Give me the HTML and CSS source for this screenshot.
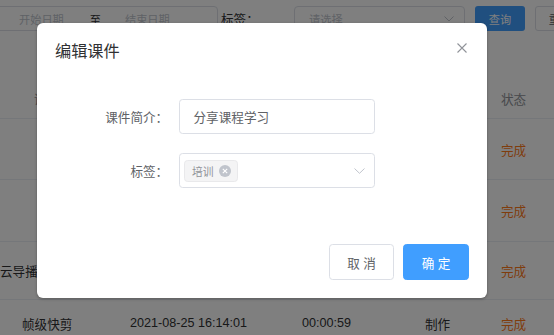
FILE: index.html
```html
<!DOCTYPE html>
<html lang="zh-CN">
<head>
<meta charset="utf-8">
<title>编辑课件</title>
<link rel="stylesheet" href="styles.css">
</head>
<body>
<div class="page">
  <div class="filter">
    <div class="date-range">
      <span class="dr-start">开始日期</span>
      <span class="dr-sep">至</span>
      <span class="dr-end">结束日期</span>
    </div>
    <span class="f-label">标签：</span>
    <div class="f-select">
      <span class="ph">请选择</span>
      <svg class="chev" width="10" height="6" viewBox="0 0 10 6"><path d="M0.5 0.5 L5 5 L9.5 0.5" fill="none" stroke="#c0c4cc" stroke-width="1"/></svg>
    </div>
    <button class="btn-query">查询</button>
    <button class="btn-reset">重置</button>
  </div>
  <div class="table">
    <div class="row head">
      <div class="cell c1h">课件名称</div><div class="cell">创建时间</div><div class="cell">时长</div><div class="cell">类型</div><div class="cell">状态</div>
    </div>
    <div class="row r1">
      <div class="cell c1in">课件一</div><div class="cell">2021-08-25 16:20:11</div><div class="cell">00:01:10</div><div class="cell">制作</div><div class="cell done">完成</div>
    </div>
    <div class="row r2">
      <div class="cell c1in">课件二</div><div class="cell">2021-08-25 16:18:32</div><div class="cell">00:02:05</div><div class="cell">制作</div><div class="cell done">完成</div>
    </div>
    <div class="row r3">
      <div class="cell c1edge">云导播台</div><div class="cell">2021-08-25 16:16:47</div><div class="cell">00:00:42</div><div class="cell">制作</div><div class="cell done">完成</div>
    </div>
    <div class="row r4">
      <div class="cell">帧级快剪</div><div class="cell">2021-08-25 16:14:01</div><div class="cell">00:00:59</div><div class="cell">制作</div><div class="cell done">完成</div>
    </div>
  </div>
</div>
<div class="mask"></div>
<div class="dialog">
  <div class="d-header">
    <span class="d-title">编辑课件</span>
    <svg class="d-close" width="10" height="10" viewBox="0 0 10 10"><path d="M0.5 0.5 L9.5 9.5 M9.5 0.5 L0.5 9.5" stroke="#909399" stroke-width="1.1" fill="none"/></svg>
  </div>
  <div class="d-body">
    <div class="form-item">
      <label class="form-label">课件简介：</label>
      <div class="input">分享课程学习</div>
    </div>
    <div class="form-item">
      <label class="form-label">标签：</label>
      <div class="input select">
        <span class="tag">培训<span class="tag-x"><svg width="6" height="6" viewBox="0 0 6 6"><path d="M0.8 0.8 L5.2 5.2 M5.2 0.8 L0.8 5.2" stroke="#fff" stroke-width="1.1"/></svg></span></span>
        <svg class="sel-chev" width="11" height="6" viewBox="0 0 11 6"><path d="M0.5 0.5 L5.5 5.3 L10.5 0.5" fill="none" stroke="#c0c4cc" stroke-width="1"/></svg>
      </div>
    </div>
  </div>
  <div class="d-footer">
    <button class="btn btn-cancel">取 消</button>
    <button class="btn btn-ok">确 定</button>
  </div>
</div>
</body>
</html>
```
FILE: styles.css
```css
html, body {
  margin: 0;
  padding: 0;
}
body {
  width: 554px;
  height: 335px;
  overflow: hidden;
  position: relative;
  background: #fff;
  font-family: "Liberation Sans", "Noto Sans CJK SC", sans-serif;
  font-size: 12.6px;
  color: #606266;
}
button {
  font-family: inherit;
  cursor: pointer;
}
.page {
  width: 554px;
  height: 335px;
  overflow: hidden;
}
.filter {
  display: flex;
  align-items: center;
  height: 25px;
  margin-top: 6px;
}
.filter > * {
  flex-shrink: 0;
}
.date-range {
  box-sizing: border-box;
  width: 228px;
  height: 25px;
  margin-left: -10px;
  border: 1px solid #dcdfe6;
  border-radius: 4px;
  display: flex;
  align-items: center;
  font-size: 11.2px;
}
.dr-start { margin-left: 28px; color: #c0c4cc; }
.dr-sep { margin-left: 26px; color: #303133; }
.dr-end { margin-left: 24px; color: #c0c4cc; }
.f-label {
  width: 73px;
  margin-left: 3px;
  color: #303133;
}
.f-select {
  box-sizing: border-box;
  width: 171px;
  height: 25px;
  border: 1px solid #dcdfe6;
  border-radius: 4px;
  display: flex;
  align-items: center;
  justify-content: space-between;
  padding: 0 10px 0 14px;
  font-size: 11.2px;
}
.ph { color: #c0c4cc; }
.btn-query {
  width: 50px;
  height: 25px;
  margin-left: 10px;
  border: none;
  border-radius: 3px;
  background: #409eff;
  color: #fff;
  font-size: 11.2px;
  padding: 0;
}
.btn-reset {
  width: 50px;
  height: 25px;
  margin-left: 10px;
  border: 1px solid #dcdfe6;
  border-radius: 3px;
  background: #fff;
  color: #606266;
  font-size: 11.2px;
  padding: 0;
}
.table {
  margin-top: 47px;
}
.row {
  display: grid;
  grid-template-columns: 108px 172px 123px 76px 1fr;
  align-items: center;
  border-bottom: 1px solid #ebeef5;
  color: #303133;
}
.row.head { height: 40px; color: #909399; }
.r1 { height: 60px; }
.r2 { height: 61px; }
.r3 { height: 57px; }
.r4 { height: 46px; border-bottom: none; }
.cell {
  padding-left: 22px;
  white-space: nowrap;
}
.c1h { padding-left: 34px; }
.c1in { padding-left: 42px; }
.c1edge { padding-left: 0; }
.done { color: #ff7a1a; }
.mask {
  position: absolute;
  inset: 0;
  background: rgba(0, 0, 0, 0.5);
}
.dialog {
  position: absolute;
  left: 37px;
  top: 23px;
  width: 450px;
  height: 275px;
  background: #fff;
  border-radius: 6px;
  box-shadow: 0 1px 3px rgba(0, 0, 0, 0.3);
  display: flex;
  flex-direction: column;
}
.d-header {
  position: relative;
  padding: 18px 18px 9px;
}
.d-title {
  display: block;
  font-size: 16.2px;
  line-height: 21.6px;
  color: #303133;
}
.d-close {
  position: absolute;
  top: 20px;
  right: 20px;
}
.d-body {
  padding: 27px 18px;
}
.form-item {
  display: flex;
  align-items: center;
  margin-bottom: 19.8px;
}
.form-label {
  box-sizing: border-box;
  width: 124px;
  text-align: right;
  padding-right: 10.8px;
  color: #606266;
}
.input {
  box-sizing: border-box;
  width: 196px;
  height: 35px;
  border: 1px solid #dcdfe6;
  border-radius: 3.6px;
  padding: 0 13.5px;
  display: flex;
  align-items: center;
  color: #606266;
}
.input.select {
  padding: 0 9px 0 4px;
  justify-content: space-between;
}
.tag {
  box-sizing: border-box;
  height: 21.6px;
  display: inline-flex;
  align-items: center;
  padding: 0 6px 0 7px;
  background: #f4f4f5;
  border: 1px solid #e9e9eb;
  border-radius: 3.6px;
  color: #909399;
  font-size: 10.8px;
}
.tag-x {
  width: 12px;
  height: 12px;
  border-radius: 50%;
  background: #c0c4cc;
  margin-left: 5px;
  display: inline-flex;
  align-items: center;
  justify-content: center;
}
.tag-x svg { display: block; }
.d-footer {
  padding: 9px 18px 18px;
  display: flex;
  justify-content: flex-end;
  gap: 9px;
}
.btn {
  height: 36px;
  border-radius: 3.6px;
  font-size: 12.6px;
  padding: 0;
}
.btn-cancel {
  width: 65px;
  background: #fff;
  border: 1px solid #dcdfe6;
  color: #606266;
}
.btn-ok {
  width: 66px;
  background: #409eff;
  border: 1px solid #409eff;
  color: #fff;
}
```
